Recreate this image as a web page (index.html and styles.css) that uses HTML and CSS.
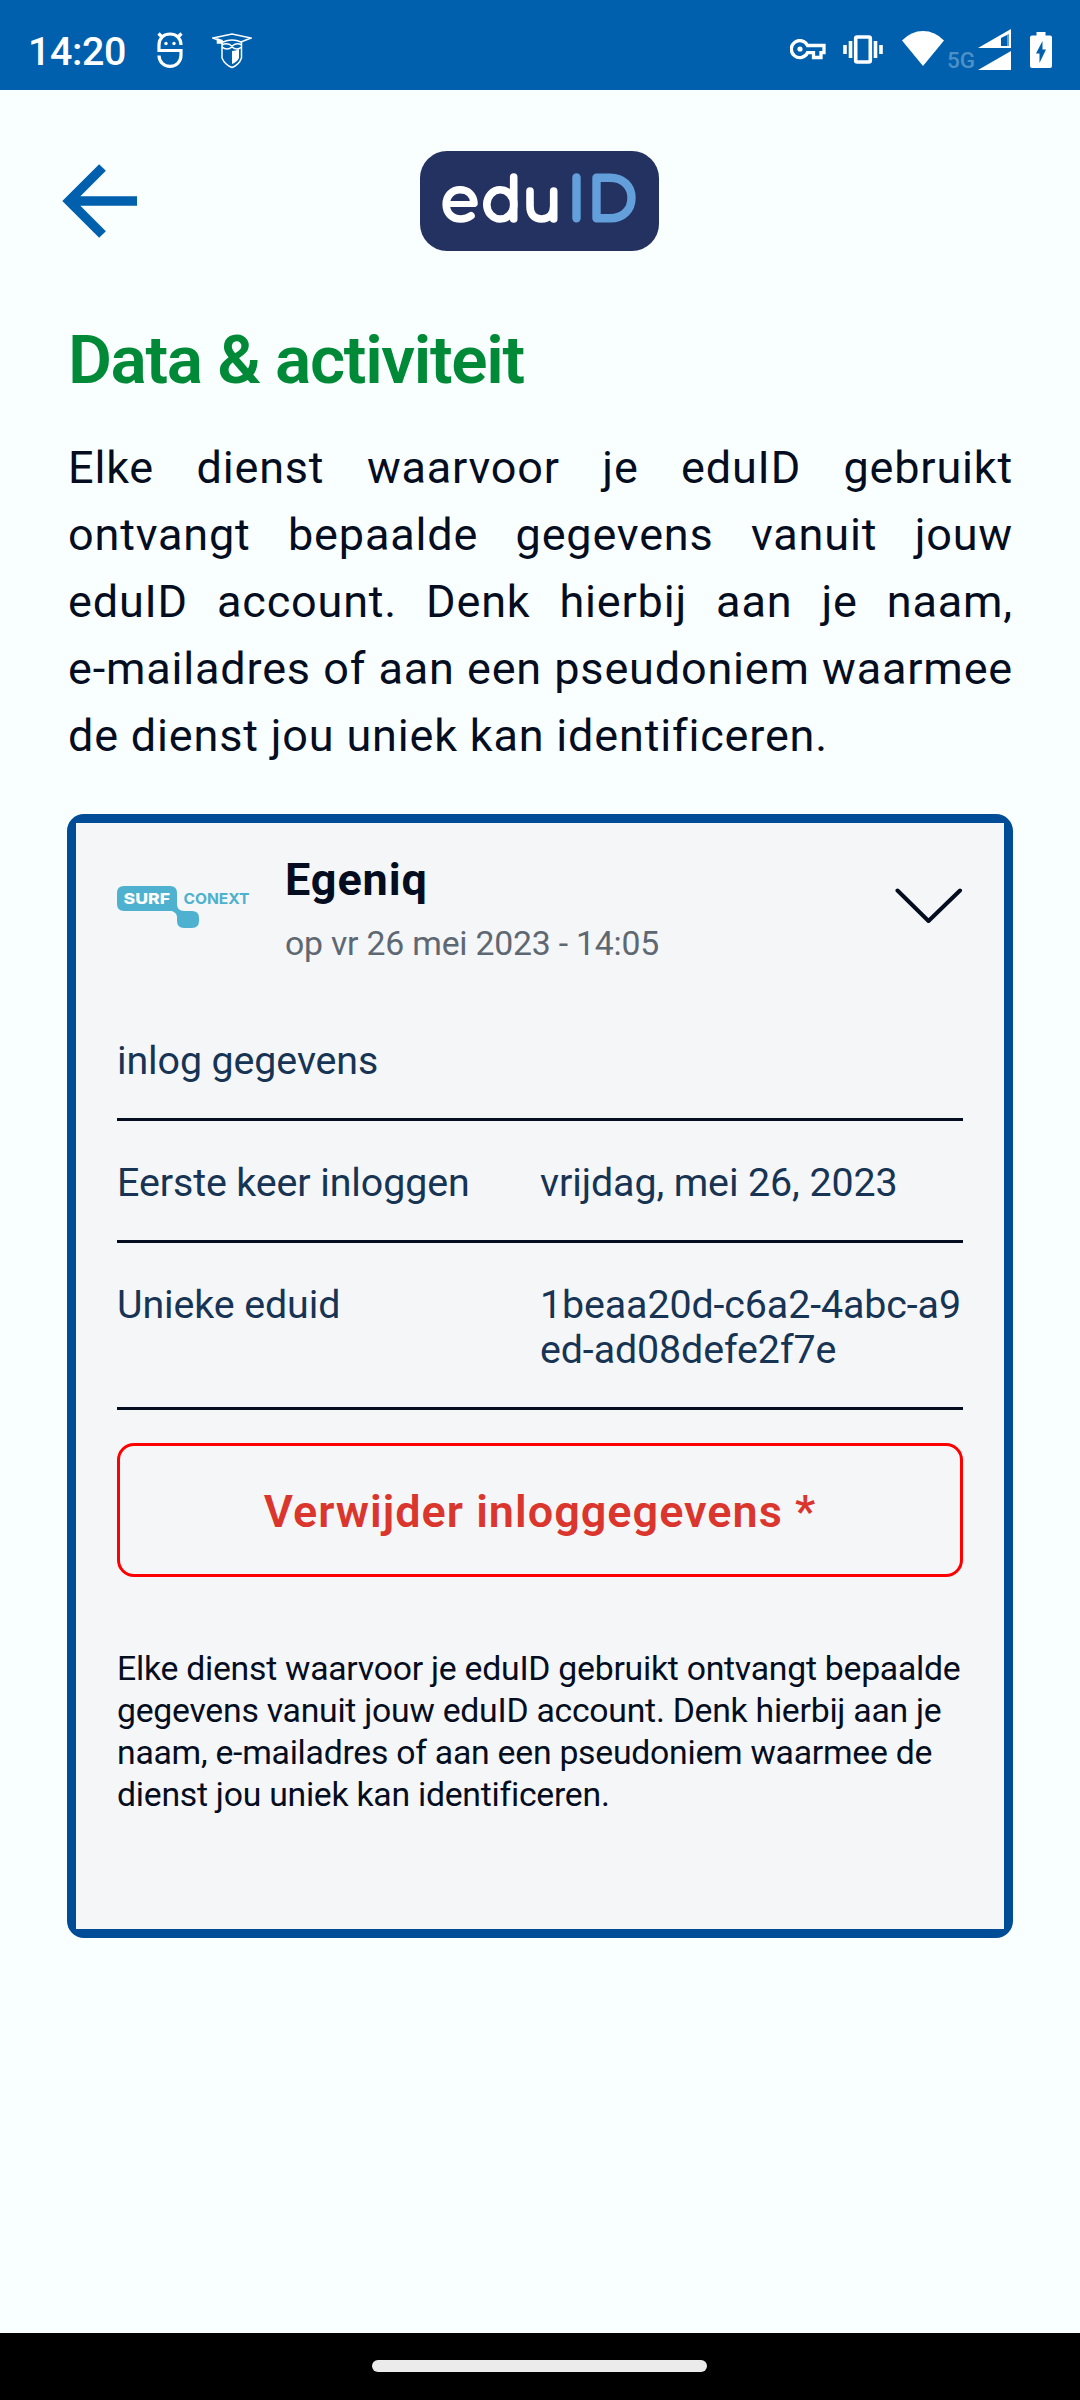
FILE: index.html
```html
<!DOCTYPE html>
<html lang="nl">
<head>
<meta charset="utf-8">
<title>eduID</title>
<link rel="stylesheet" href="styles.css">
</head>
<body>
<header class="status">
  <span class="clock">14:20</span>
  <svg class="ic-app" width="26" height="36" viewBox="0 0 26 36" fill="none" stroke="#fff" stroke-width="3.200"><path d="M24 13C24 6 19 2 13 2S2 6 2 13V18.500H24V23C24 30 19 34.300 13 34.300S2 30 2 23.500M1.500 1.500L5 5M24.500 1.500L21 5"/><circle cx="9" cy="11.500" r="1.700" fill="#fff" stroke="none"/><circle cx="17" cy="11.500" r="1.700" fill="#fff" stroke="none"/></svg>
  <svg class="ic-grad" width="40" height="36" viewBox="0 0 40 36" fill="none" stroke="#fff" stroke-width="1.500"><path d="M1 5L20 1L39 5L29 9Q20 5 11 9Z"/><path d="M5.500 6V10H10V7.500Z" fill="#fff"/><path d="M10 8V25Q13 32 20 34.500Q27 32 29.500 25V8M10 12Q15 9 20 13Q25 9 29.500 12M10 14Q15 18 20 14Q25 18 29.500 14"/><path d="M20 18Q24 18 27 16V25Q25 29 20 31Z" fill="#fff" stroke="none"/></svg>
  <span class="spacer"></span>
  <svg class="ic-key" width="36" height="21" viewBox="0 0 36 21" fill="none" stroke="#fff" stroke-width="3.300"><path d="M17.500 6.500H34V13.700H31V18.500H23.500V13.700H17.500A8.500 8.500 0 1 1 17.500 6.500Z"/><circle cx="10" cy="10" r="2.600" fill="#fff" stroke="none"/></svg>
  <svg class="ic-vib" width="40" height="29" viewBox="0 0 40 29" fill="none" stroke="#fff" stroke-width="3.600"><rect x="12.700" y="2" width="14.600" height="25" rx="1.500"/><path d="M7.500 6V23M2 10V19M32.500 6V23M38 10V19"/></svg>
  <svg class="ic-wifi" width="42" height="35" viewBox="0 0 42 35"><path d="M0 9.500Q9 0 21 0T42 9.500L21 35Z" fill="#fff"/></svg>
  <span class="net">5G</span>
  <svg class="ic-sig" width="33" height="41" viewBox="0 0 33 41"><path fill="#fff" fill-rule="evenodd" d="M33 0V19H0ZM31 5V17H23V9ZM33 22V41H0Z"/><path fill="#fff" d="M29 6L31 5V17H29Z" opacity=".4"/></svg>
  <svg class="ic-bat" width="22" height="36" viewBox="0 0 22 36"><path d="M6.500 0H15.500V3.500H20Q22 3.500 22 5.500V34Q22 36 20 36H2Q0 36 0 34V5.500Q0 3.500 2 3.500H6.500Z" fill="#fff"/><path d="M12.500 9V17.500H16L9.500 31V21.500H6Z" fill="#0060ad"/></svg>
</header>
<main class="screen">
  <nav class="topbar">
    <svg class="back" width="76" height="74" viewBox="0 0 76 74" fill="none" stroke="#0060ad" stroke-width="9.500"><path d="M40.500 3.500L7 37L40.500 70.500M8 37H75"/></svg>
    <svg class="logo" width="239" height="100" viewBox="0 0 239 100"><rect width="239" height="100" rx="27" fill="#233260"/><g fill="none" stroke-linecap="round" stroke-linejoin="round"><g stroke="#fff" stroke-width="7.600"><path d="M29 53H54" stroke-width="6"/><path d="M54 52C53.500 44 48 38.800 40 38.800S26.200 45 26.200 53.500S32 68 41 68C45 68 48 67 51 64.800"/><path d="M93.700 26V68"/><ellipse cx="80.300" cy="53.400" rx="13.500" ry="14.600"/><path d="M110 40V55C110 63 114 68 121.500 68S133.700 63 133.700 55V40M133.700 54V68"/></g><g stroke="#629fdb" stroke-width="8.400"><path d="M156.500 26.500V67.300"/><path d="M176.500 26.700H190C203 26.700 211.500 35 211.500 47S203 67.300 190 67.300H176.500Z"/></g></g></svg>
  </nav>
  <h1 class="title">Data &amp; activiteit</h1>
  <p class="intro">Elke dienst waarvoor je eduID gebruikt ontvangt bepaalde gegevens vanuit jouw eduID account. Denk hierbij aan je naam, <span class="nb">e-mailadres</span> of aan een pseudoniem waarmee de dienst jou uniek kan identificeren.</p>
  <section class="card">
    <div class="inner">
      <div class="service">
        <svg class="surf" width="133" height="43" viewBox="0 0 133 43"><path fill="#4db1cf" d="M7 0H53Q60 0 60 7V18Q60 25 67 25H75Q82 25 82 32V35Q82 42 75 42H67Q60 42 60 35V31Q60 27 55 25H7Q0 25 0 18V7Q0 0 7 0Z"/><text x="6.500" y="18.400" class="surf-a" textLength="46.500" lengthAdjust="spacingAndGlyphs">SURF</text><text x="66.500" y="18.400" class="surf-b" textLength="66" lengthAdjust="spacingAndGlyphs">CONEXT</text></svg>
        <div class="names"><h2 class="name">Egeniq</h2><p class="date">op vr 26 mei 2023 - 14:05</p></div>
        <svg class="chev" width="68" height="36" viewBox="0 0 68 36" fill="none" stroke="#050d20" stroke-width="4" stroke-linecap="round" stroke-linejoin="round"><path d="M2.500 2.500L33.500 33L65 2.500"/></svg>
      </div>
      <dl class="rows">
        <div class="row"><dt>inlog gegevens</dt></div>
        <div class="row"><dt>Eerste keer inloggen</dt><dd>vrijdag, mei 26, 2023</dd></div>
        <div class="row"><dt>Unieke eduid</dt><dd>1beaa20d-c6a2-4abc-a9<br>ed-ad08defe2f7e</dd></div>
      </dl>
      <button class="delete">Verwijder inloggegevens *</button>
      <p class="note">Elke dienst waarvoor je eduID gebruikt ontvangt bepaalde gegevens vanuit jouw eduID account. Denk hierbij aan je naam, e-mailadres of aan een pseudoniem waarmee de dienst jou uniek kan identificeren.</p>
    </div>
  </section>
</main>
<footer class="navbar"><div class="pill"></div></footer>
</body>
</html>
```
FILE: styles.css
```css
* { box-sizing: border-box; margin: 0; padding: 0; }
body { width: 1080px; height: 2400px; display: flex; flex-direction: column; background: #f9feff; color: #050d20; font-family: Roboto, sans-serif; overflow: hidden; }
svg { display: block; flex: none; }
.status { height: 90px; flex: none; display: flex; align-items: flex-start; background: #0060ad; color: #fff; padding: 0 28px 0 28px; }
.clock { width: 129px; font-size: 39.4px; font-weight: 500; line-height: 46px; margin-top: 29px; letter-spacing: -.400px; }
.ic-app { margin-top: 32px; }
.ic-grad { margin: 33px 0 0 29px; }
.spacer { flex: 1; }
.ic-key { margin: 39px 17px 0 0; }
.ic-vib { margin: 35px 19px 0 0; overflow: visible; }
.ic-wifi { margin: 31px 3px 0 0; }
.net { width: 31px; font-size: 22.500px; line-height: 26px; font-weight: 500; margin-top: 47px; color: #4d90c6; }
.ic-sig { margin: 29px 19px 0 0; }
.ic-bat { margin-top: 32px; }
.screen { flex: 1; padding: 61px 67px 0; }
.topbar { height: 100px; display: grid; grid-template-columns: 353px 239px 1fr; align-items: center; }
.back { margin-left: -5px; }
.title { margin-top: 69px; padding-left: 1px; font-size: 67.500px; line-height: 79px; font-weight: 600; letter-spacing: -1.350px; color: #008a37; white-space: nowrap; }
.intro { margin-top: 35px; padding-left: 1px; font-size: 45px; line-height: 67px; letter-spacing: .820px; text-align: justify; }
.nb { white-space: nowrap; }
.card { margin-top: 45px; height: 1124px; background: #004c97; border-radius: 17px; padding: 9px; }
.inner { height: 100%; background: #f5f6f8; padding: 31px 41px 0; }
.service { display: flex; height: 145px; }
.surf { margin-top: 32px; }
.surf-a, .surf-b { font-family: Inter, sans-serif; font-weight: 800; font-size: 15.200px; fill: #fff; }
.surf-b { fill: #4db1cf; font-weight: 700; }
.names { flex: 1; margin: -1px 0 0 35px; }
.name { font-size: 45px; line-height: 53px; font-weight: 700; letter-spacing: .900px; }
.date { margin-top: 18px; font-size: 33.750px; line-height: 40px; letter-spacing: -.200px; color: #5e6872; }
.chev { margin-top: 34px; }
.rows { color: #173454; font-size: 39.375px; line-height: 45px; letter-spacing: -.100px; }
.row { display: grid; grid-template-columns: repeat(2, minmax(0, 1fr)); padding: 39px 0 35px; border-bottom: 3px solid #050d20; }
dd { white-space: nowrap; }
.delete { display: block; width: 846px; height: 134px; margin-top: 33px; padding-top: 3px; border: 3px solid #f00; border-radius: 17px; background: none; color: #db362d; font: 600 45px/53px Roboto, sans-serif; letter-spacing: 1px; }
.note { margin-top: 71px; font-size: 33.750px; line-height: 42px; width: 850px; letter-spacing: -.250px; }
.navbar { height: 67px; flex: none; background: #000; display: flex; justify-content: center; align-items: flex-start; }
.pill { width: 335px; height: 12px; margin: 27px 1px 0 0; border-radius: 6px; background: #ebebeb; }
```
